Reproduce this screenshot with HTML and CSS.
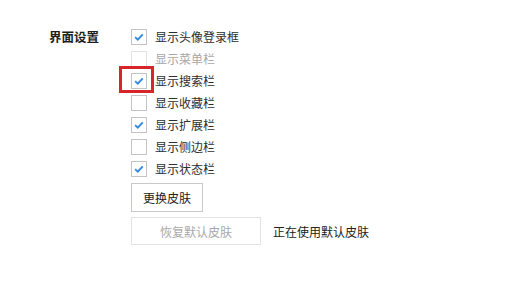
FILE: index.html
```html
<!DOCTYPE html>
<html>
<head>
<meta charset="utf-8">
<link rel="stylesheet" href="styles.css">
</head>
<body>
<div class="section">
  <div class="label">界面设置</div>
  <div class="options">
    <div class="opt"><span class="cb checked"><svg viewBox="0 0 16 16"><path d="M3.6 8.2 L6.6 11 L12.3 4.9" /></svg></span><span class="txt">显示头像登录框</span></div>
    <div class="opt disabled"><span class="cb"></span><span class="txt">显示菜单栏</span></div>
    <div class="opt"><span class="cb checked hl"><svg viewBox="0 0 16 16"><path d="M3.6 8.2 L6.6 11 L12.3 4.9" /></svg></span><span class="txt">显示搜索栏</span></div>
    <div class="opt"><span class="cb"></span><span class="txt">显示收藏栏</span></div>
    <div class="opt"><span class="cb checked"><svg viewBox="0 0 16 16"><path d="M3.6 8.2 L6.6 11 L12.3 4.9" /></svg></span><span class="txt">显示扩展栏</span></div>
    <div class="opt"><span class="cb"></span><span class="txt">显示侧边栏</span></div>
    <div class="opt"><span class="cb checked"><svg viewBox="0 0 16 16"><path d="M3.6 8.2 L6.6 11 L12.3 4.9" /></svg></span><span class="txt">显示状态栏</span></div>
    <button class="btn btn-change">更换皮肤</button>
    <div class="restore-row">
      <button class="btn btn-restore" disabled>恢复默认皮肤</button>
      <span class="status">正在使用默认皮肤</span>
    </div>
  </div>
</div>
</body>
</html>
```
FILE: styles.css
```css
html, body {
  margin: 0;
  padding: 0;
  background: #ffffff;
}
body {
  font-family: "Noto Sans CJK SC", "Noto Sans", sans-serif;
  font-size: 12px;
  color: #2e2e2e;
  width: 519px;
  height: 281px;
  overflow: hidden;
}
.section {
  display: flex;
  padding: 26px 0 0 49px;
}
.label {
  width: 82px;
  font-weight: bold;
  color: #1e1e1e;
  line-height: 22px;
  font-size: 12.5px;
}
.options {
  display: flex;
  flex-direction: column;
  align-items: flex-start;
}
.opt {
  display: flex;
  align-items: center;
  height: 22px;
}
.cb {
  position: relative;
  width: 14px;
  height: 14px;
  border: 1px solid #c4c4c4;
  background: #fff;
  margin-right: 8px;
  display: flex;
  align-items: center;
  justify-content: center;
  box-sizing: content-box;
}
.cb svg {
  width: 16px;
  height: 16px;
  fill: none;
  stroke: #2f87e2;
  stroke-width: 2.1;
}
.cb.hl::after {
  content: "";
  position: absolute;
  left: -13px;
  top: -8px;
  width: 29px;
  height: 21px;
  border: 3px solid #d7262b;
}
.txt {
  line-height: 22px;
}
.disabled .cb {
  border-color: #e2e2e2;
}
.disabled .txt {
  color: #a8a8a8;
}
.btn {
  font-family: inherit;
  font-size: 12px;
  background: #ffffff;
  border: 1px solid #c9c9c9;
  color: #222;
  padding: 0;
  border-radius: 0;
}
.btn-change {
  margin-top: 3px;
  width: 72px;
  height: 29px;
}
.restore-row {
  display: flex;
  align-items: center;
  margin-top: 5px;
}
.btn-restore {
  width: 130px;
  height: 28px;
  border-color: #e3e3e3;
  color: #a9a9a9;
}
.status {
  margin-left: 12px;
  color: #222;
}
```
